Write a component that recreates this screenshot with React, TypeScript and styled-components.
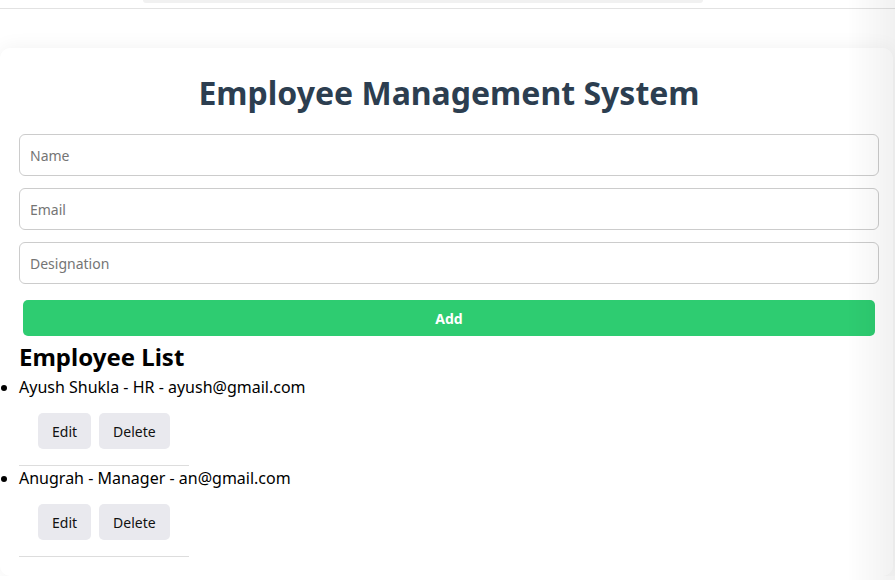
import styled, { createGlobalStyle } from "styled-components";

const Global = createGlobalStyle`
  html, body {
    margin: 0;
    padding: 0;
    background: #ffffff;
    font-family: "Noto Sans", "Open Sans", sans-serif;
    color: #000;
    overflow: hidden;
  }
`

const TopBar = styled.header`
  height: 8px;
  border-bottom: 1px solid #e2e2e2;
  padding-left: 143px;
`
const SearchStub = styled.div`
  width: 560px;
  height: 3px;
  background: #f1f1f1;
  border-radius: 0 0 4px 4px;
`
const Main = styled.main`
  padding-top: 39px;
`
const Card = styled.section`
  background: #fff;
  border-radius: 10px;
  box-shadow: 0 0 20px rgba(0, 0, 0, 0.06);
  padding: 20px 14px 18px 19px;
  margin-right: 2px;
`
const Title = styled.h1`
  margin: 3px 0 20px;
  text-align: center;
  font-size: 32px;
  font-weight: 700;
  color: #2c3e50;
`
const Form = styled.form`
  display: flex;
  flex-direction: column;
  gap: 12px;
`
const Field = styled.input`
  box-sizing: border-box;
  height: 42px;
  padding: 0 10px;
  border: 1px solid #cccccc;
  border-radius: 6px;
  font-family: inherit;
  font-size: 14px;
  color: #333;
  outline: none;

  &::placeholder {
    color: #757575;
  }
`
const AddButton = styled.button`
  margin: 4px 4px 0;
  height: 36px;
  border: none;
  border-radius: 5px;
  background: #2ecc71;
  color: #fff;
  font-family: inherit;
  font-size: 14px;
  font-weight: 700;
  cursor: pointer;
`
const ListTitle = styled.h2`
  margin: 4px 0 3px;
  font-size: 24px;
  font-weight: 700;
`
const List = styled.ul`
  margin: 0;
  padding: 0;
`
const Item = styled.li`
  font-size: 16px;
`
const Actions = styled.div`
  display: flex;
  gap: 8px;
  padding-left: 19px;
  margin-top: 15px;
`
const ActionButton = styled.button`
  height: 36px;
  padding: 0 14px;
  border: none;
  border-radius: 5px;
  background: #e9e9ee;
  color: #111;
  font-family: inherit;
  font-size: 14px;
  cursor: pointer;
`
const Divider = styled.hr`
  width: 170px;
  margin: 16px 0 1px;
  border: none;
  border-top: 1px solid #dddddd;
`
const EdgeFade = styled.div`
  position: fixed;
  top: 0;
  right: 0;
  bottom: 0;
  width: 48px;
  pointer-events: none;
  background: linear-gradient(to right, rgba(0, 0, 0, 0), rgba(0, 0, 0, 0.055));
`

const employees = [
  { name: "Ayush Shukla", role: "HR", email: "ayush@gmail.com" },
  { name: "Anugrah", role: "Manager", email: "an@gmail.com" },
];

export default function App() {
  return (
    <>
      <Global />
      <TopBar>
        <SearchStub />
      </TopBar>
      <Main>
        <Card>
          <Title>Employee Management System</Title>
          <Form onSubmit={(e) => e.preventDefault()}>
            <Field placeholder="Name" />
            <Field placeholder="Email" />
            <Field placeholder="Designation" />
            <AddButton type="submit">Add</AddButton>
          </Form>
          <ListTitle>Employee List</ListTitle>
          <List>
            {employees.map((emp) => (
              <Item key={emp.email}>
                {emp.name} - {emp.role} - {emp.email}
                <Actions>
                  <ActionButton>Edit</ActionButton>
                  <ActionButton>Delete</ActionButton>
                </Actions>
                <Divider />
              </Item>
            ))}
          </List>
        </Card>
      </Main>
      <EdgeFade />
    </>
  );
}
